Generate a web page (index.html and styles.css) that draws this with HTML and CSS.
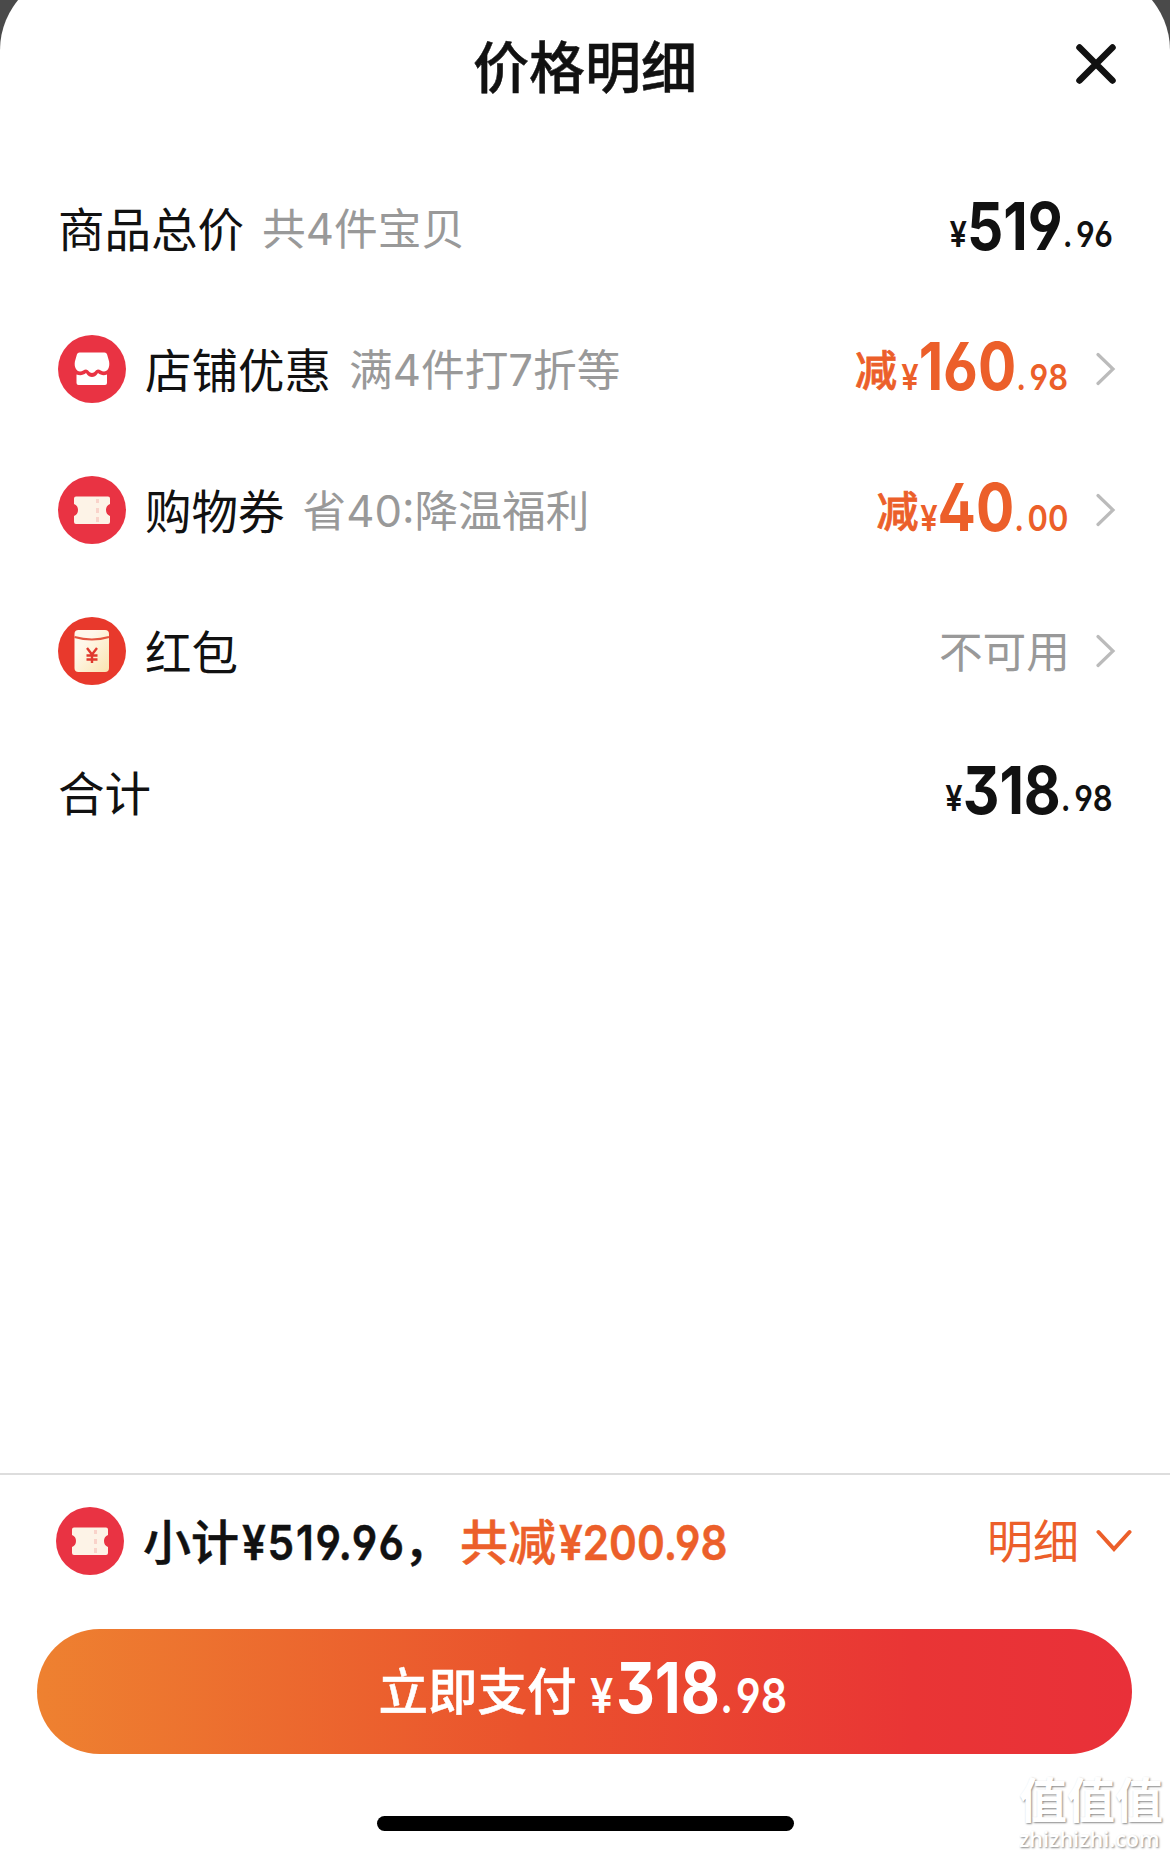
FILE: index.html
```html
<!DOCTYPE html>
<html lang="zh-CN">
<head>
  <meta charset="UTF-8">
  <meta name="viewport" content="width=device-width, initial-scale=1.0">
  <title>价格明细</title>
  <link rel="stylesheet" href="styles.css">
</head>

<body>
  <div class="sheet">
    <header class="header">
      <h1>价格明细</h1>
      <button class="close" aria-label="关闭">
        <svg width="44" height="44" viewBox="0 0 44 44"><path d="M5.500 5.500L38.500 38.500M38.500 5.500L5.500 38.500"/></svg>
      </button>
    </header>

    <main class="list">
      <div class="row">
        <span class="label">商品总价</span>
        <span class="note">共<span class="digit">4</span>件宝贝</span>
        <span class="price raised"><small>¥</small><b>519</b><small class="dec"><i>.</i>96</small></span>
      </div>

      <div class="row">
        <svg class="icon" viewBox="0 0 68 68">
          <circle cx="34" cy="34" r="34" fill="#e93343"/>
          <path fill="#fff" d="M21.500 17.500h25q2 0 2.600 2l2 7c1 6-1.500 10-5.100 10-2.500 0-4-2-6-2s-3.500 3.500-6 3.500-4-3.500-6-3.500-3.500 2-6 2c-3.600 0-6.100-4.500-5.100-10l2-7q.6-2 2.600-2z"/>
          <path fill="#fff" d="M18.500 39.500c4 1.500 7 .5 9.500-1.500 2 3 4 4 6 4s4-1 6-4c2.500 2 5.500 3 9 1.500v8.500q0 2-2 2h-26.500q-2 0-2-2z"/>
        </svg>
        <span class="label">店铺优惠</span>
        <span class="note">满<span class="digit">4</span>件打<span class="digit">7</span>折等</span>
        <span class="cut">减</span>
        <span class="price orange"><small>¥</small><b>160</b><small class="dec"><i>.</i>98</small></span>
        <svg class="arrow" viewBox="0 0 20 34"><path d="M2 2.500L17 17L2 31.500"/></svg>
      </div>

      <div class="row">
        <svg class="icon" viewBox="0 0 68 68">
          <circle cx="34" cy="34" r="34" fill="#e93343"/>
          <path fill="#fdf3e7" d="M18 20.500h32q2 0 2 2v5.500q-4 1.500-4 6t4 6v6q0 2-2 2H18q-2 0-2-2v-6q4-1.500 4-6t-4-6v-5.500q0-2 2-2z"/>
          <path fill="#f9d3ca" d="M38 23h3v4h-3zM38 32h3v5h-3zM38 41h3v5h-3z"/>
        </svg>
        <span class="label">购物券</span>
        <span class="note">省<span class="digit">40:</span>降温福利</span>
        <span class="cut">减</span>
        <span class="price orange"><small>¥</small><b>40</b><small class="dec"><i>.</i>00</small></span>
        <svg class="arrow" viewBox="0 0 20 34"><path d="M2 2.500L17 17L2 31.500"/></svg>
      </div>

      <div class="row">
        <svg class="icon" viewBox="0 0 68 68">
          <defs>
            <linearGradient id="packet" x1="0" y1="0" x2="1" y2="1">
              <stop offset="0.300" stop-color="#fff8ea"/>
              <stop offset="1" stop-color="#fae3b0"/>
            </linearGradient>
          </defs>
          <circle cx="34" cy="34" r="34" fill="#e8392c"/>
          <rect x="16.500" y="13" width="34.500" height="42" rx="4" fill="url(#packet)"/>
          <path d="M16.500 20Q34 25 51 20" fill="none" stroke="#e4553f" stroke-width="2"/>
          <path d="M29 31L34 37.500L39 31M34 37.500V46M28.500 38.500H39.500M28.500 42.500H39.500" fill="none" stroke="#e0392e" stroke-width="2.400"/>
        </svg>
        <span class="label">红包</span>
        <span class="note disabled">不可用</span>
        <svg class="arrow" viewBox="0 0 20 34"><path d="M2 2.500L17 17L2 31.500"/></svg>
      </div>

      <div class="row">
        <span class="label">合计</span>
        <span class="price raised"><small>¥</small><b>318</b><small class="dec"><i>.</i>98</small></span>
      </div>
    </main>

    <footer class="footer">
      <div class="subtotal">
        <svg class="icon" viewBox="0 0 68 68">
          <circle cx="34" cy="34" r="34" fill="#e93343"/>
          <path fill="#fdf3e7" d="M18 20.500h32q2 0 2 2v5.500q-4 1.500-4 6t4 6v6q0 2-2 2H18q-2 0-2-2v-6q4-1.500 4-6t-4-6v-5.500q0-2 2-2z"/>
          <path fill="#f9d3ca" d="M38 23h3v4h-3zM38 32h3v5h-3zM38 41h3v5h-3z"/>
        </svg>
        <span class="sum">小计<span class="sum-num wide">¥519.96</span><span class="comma">，</span></span>
        <span class="sum orange">共减<span class="sum-num">¥200.98</span></span>
        <span class="detail">明细</span>
        <svg class="down" viewBox="0 0 36 24"><path d="M2.500 3L18 20L33.500 3"/></svg>
      </div>
      <button class="pay">
        <span class="pay-text">立即支付</span>
        <span class="price pay-price"><small>¥</small><b>318</b><small class="dec"><i>.</i>98</small></span>
      </button>
      <div class="home-bar"></div>
    </footer>
  </div>

  <div class="watermark">
    <div class="mark-cn">值值值</div>
    <div class="mark-en">zhizhizhi.com</div>
  </div>
</body>
</html>
```
FILE: styles.css
```css
* {
  box-sizing: border-box;
}

body {
  margin: 0;
  height: 1856px;
  overflow: hidden;
  position: relative;
  background-color: #4a4a4a;
  font-family: "Noto Sans CJK SC", sans-serif;
  color: #111;
}

.sheet {
  display: flex;
  flex-direction: column;
  height: 1884px;
  margin-top: -28px;
  padding-top: 28px;
  border-radius: 78px 78px 0 0;
  background-color: #fff;
}

.header {
  display: grid;
  grid-template-columns: 1fr auto 1fr;
  align-items: center;
  height: 132px;
  padding-right: 52px;
}

h1 {
  grid-column: 2;
  margin: 0;
  padding: 0 0 5px 52px;
  font-size: 56px;
  font-weight: 500;
  line-height: 80px;
  -webkit-text-stroke: 0.5px;
}

button {
  border: none;
  padding: 0;
  background: none;
  font-family: inherit;
}

.close {
  justify-self: end;
  height: 44px;
  margin-top: -4px;
}

.close path {
  stroke: #111;
  stroke-width: 6.5;
  stroke-linecap: round;
}

.list {
  flex: 1;
  padding: 25px 54px 0 58px;
}

.row {
  display: flex;
  align-items: center;
  height: 141px;
}

.icon {
  width: 68px;
  height: 68px;
  margin-right: 19px;
  flex: none;
}

.label {
  padding-bottom: 1px;
  font-size: 46.5px;
  line-height: 68px;
  font-weight: 400;
}

.note {
  margin-left: 18px;
  padding-bottom: 3px;
  font-size: 43.7px;
  line-height: 68px;
  font-weight: 400;
  color: #999;
}

.digit {
  font-family: Inter, sans-serif;
  font-weight: 400;
  line-height: 1;
}

.disabled {
  margin-left: auto;
  margin-right: -1px;
}

.cut {
  margin-left: auto;
  padding-bottom: 2px;
  font-size: 42px;
  font-weight: 500;
  color: #ec5f2a;
  -webkit-text-stroke: 0.8px;
}

/* narrow DIN-like figures */
.price {
  display: flex;
  align-items: baseline;
  margin-left: auto;
  padding-top: 8px;
  font-family: Inter, sans-serif;
  font-feature-settings: "ss01";
  line-height: 80px;
  transform: scaleX(0.86);
  transform-origin: right center;
}

.cut + .price {
  margin-left: -23px;
  margin-right: 1px;
  padding-top: 5px;
}

.price b {
  font-size: 66px;
  font-weight: 700;
}

.price small {
  font-size: 36px;
  font-weight: 600;
}

.price i {
  font-style: normal;
  margin-right: 4px;
}

.raised {
  margin-right: 3px;
}

.raised small {
  position: relative;
  top: -3px;
}

.orange {
  color: #ec5f2a;
}

.arrow {
  width: 20px;
  height: 34px;
  margin-left: 27px;
}

.arrow path {
  fill: none;
  stroke: #bbb;
  stroke-width: 3.2;
  stroke-linecap: round;
}

.footer {
  height: 383px;
  border-top: 2px solid #ddd;
}

.subtotal {
  display: flex;
  align-items: center;
  height: 131px;
  padding: 0 38px 0 56px;
}

.sum {
  display: flex;
  align-items: baseline;
  font-size: 48px;
  font-weight: 500;
  line-height: 70px;
  -webkit-text-stroke: 0.5px;
}

.sum-num {
  width: 162px;
  margin-left: 3px;
  font-family: Inter, sans-serif;
  font-feature-settings: "ss01";
  font-weight: 600;
  transform: scaleX(0.88);
  transform-origin: left center;
}

.wide {
  letter-spacing: 2px;
}

.comma {
  margin-right: 8px;
}

.detail {
  margin-left: auto;
  padding-bottom: 5px;
  font-size: 46px;
  color: #ec5f2a;
}

.down {
  width: 36px;
  height: 24px;
  margin-left: 17px;
}

.down path {
  fill: none;
  stroke: #ec5f2a;
  stroke-width: 4;
  stroke-linecap: round;
}

.pay {
  display: flex;
  align-items: center;
  justify-content: center;
  width: 1095px;
  height: 125px;
  margin: 23px 0 0 37px;
  padding-right: 3px;
  border-radius: 63px;
  background: linear-gradient(90deg, #ee8130, #ea522d 45%, #e93535 80%, #e93039);
  color: #fff;
}

.pay-text {
  padding-bottom: 7px;
  font-size: 49.5px;
  font-weight: 500;
  -webkit-text-stroke: 0.5px;
}

.pay-price {
  margin-left: -18px;
  padding-top: 0;
}

.pay-price b {
  font-size: 70px;
  margin-left: 3px;
}

.pay-price small {
  font-size: 48px;
}

.pay-price i {
  margin-right: 3px;
}

.home-bar {
  width: 417px;
  height: 15px;
  margin: 62px auto 0;
  border-radius: 8px;
  background-color: #000;
}

.watermark {
  position: absolute;
  right: 5px;
  bottom: 3px;
  width: 146px;
  white-space: nowrap;
  color: #fff;
  text-shadow: 1px 1px 2px #888;
}

.mark-cn {
  font-size: 48px;
  line-height: 54px;
  font-weight: 700;
}

.mark-en {
  font-family: "Open Sans", sans-serif;
  font-size: 21.6px;
  line-height: 29px;
  font-weight: 600;
}
```
